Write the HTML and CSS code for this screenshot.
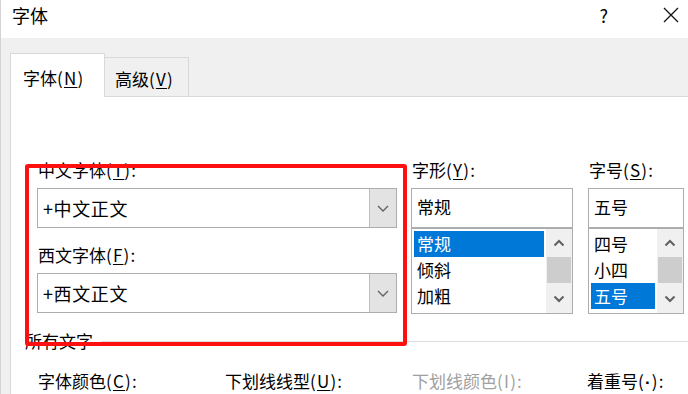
FILE: index.html
```html
<!DOCTYPE html>
<html lang="zh-CN">
<head>
<meta charset="utf-8">
<title>字体</title>
<link rel="stylesheet" href="styles.css">
</head>
<body>
<div class="window">
  <div class="titlebar">
    <span class="title">字体</span>
    <span class="help">?</span>
    <svg class="close" width="16" height="16" viewBox="0 0 16 16"><path d="M1 1 L15 15 M15 1 L1 15" stroke="#111" stroke-width="1.3" fill="none"/></svg>
  </div>
  <div class="frame">
    <div class="tabs">
      <div class="tab active">字体<span class="k">(<u>N</u>)</span></div>
      <div class="tab">高级<span class="k">(<u>V</u>)</span></div>
    </div>
    <div class="panel">
      <div class="fontrow">
        <div class="col col-face">
          <div class="lbl">中文字体<span class="k">(<u>T</u>):</span></div>
          <div class="combo">
            <span class="combo-text">+中文正文</span>
            <span class="drop"><svg width="12" height="7" viewBox="0 0 12 7"><path d="M1 1 L6 6 L11 1" stroke="#606060" stroke-width="1.3" fill="none"/></svg></span>
          </div>
          <div class="lbl lbl-gap">西文字体<span class="k">(<u>F</u>):</span></div>
          <div class="combo">
            <span class="combo-text">+西文正文</span>
            <span class="drop"><svg width="12" height="7" viewBox="0 0 12 7"><path d="M1 1 L6 6 L11 1" stroke="#606060" stroke-width="1.3" fill="none"/></svg></span>
          </div>
        </div>
        <div class="col col-style">
          <div class="lbl">字形<span class="k">(<u>Y</u>):</span></div>
          <div class="input">常规</div>
          <div class="list">
            <div class="items">
              <div class="item sel">常规</div>
              <div class="item">倾斜</div>
              <div class="item">加粗</div>
            </div>
            <div class="scroll">
              <div class="sbtn"><svg width="12" height="8" viewBox="0 0 12 8"><path d="M1.5 6.5 L6 2 L10.5 6.5" stroke="#606060" stroke-width="2" fill="none"/></svg></div>
              <div class="thumb"></div>
              <div class="track"></div>
              <div class="sbtn"><svg width="12" height="8" viewBox="0 0 12 8"><path d="M1.5 1.5 L6 6 L10.5 1.5" stroke="#606060" stroke-width="2" fill="none"/></svg></div>
            </div>
          </div>
        </div>
        <div class="col col-size">
          <div class="lbl">字号<span class="k">(<u>S</u>):</span></div>
          <div class="input">五号</div>
          <div class="list">
            <div class="items">
              <div class="item">四号</div>
              <div class="item">小四</div>
              <div class="item sel">五号</div>
            </div>
            <div class="scroll">
              <div class="sbtn"><svg width="12" height="8" viewBox="0 0 12 8"><path d="M1.5 6.5 L6 2 L10.5 6.5" stroke="#606060" stroke-width="2" fill="none"/></svg></div>
              <div class="thumb"></div>
              <div class="track"></div>
              <div class="sbtn"><svg width="12" height="8" viewBox="0 0 12 8"><path d="M1.5 1.5 L6 6 L10.5 1.5" stroke="#606060" stroke-width="2" fill="none"/></svg></div>
            </div>
          </div>
        </div>
      </div>
      <div class="group"><span>所有文字</span><span class="line"></span></div>
      <div class="bottom">
        <span>字体颜色<span class="k">(<u>C</u>):</span></span>
        <span>下划线线型<span class="k">(<u>U</u>):</span></span>
        <span class="disabled">下划线颜色<span class="k">(I):</span></span>
        <span>着重号<span class="k">(<span class="dot">·</span>):</span></span>
      </div>
    </div>
  </div>
  <div class="mark"></div>
</div>
</body>
</html>
```
FILE: styles.css
```css
* { box-sizing: border-box; margin: 0; padding: 0; }
html, body { width: 688px; height: 394px; overflow: hidden; }
body {
  font-family: "Noto Sans CJK SC", "Microsoft YaHei", sans-serif;
  color: #000;
  background: #fff;
}
u { text-decoration: underline; text-underline-offset: 2px; text-decoration-thickness: 1px; }
.k { letter-spacing: 1.2px; }
.dot { font-family: "Liberation Sans", sans-serif; font-weight: bold; }

.window {
  position: relative;
  width: 688px;
  height: 394px;
  border-left: 1px solid #d4d4d4;
}

.titlebar {
  height: 38px;
  display: flex;
  align-items: flex-start;
  background: #fff;
}
.title { flex: 1; font-size: 18px; line-height: 24px; padding: 3px 0 0 11px; }
.help { font-size: 18px; line-height: 24px; margin-top: 3px; margin-right: 55px; }
.close { margin-top: 7px; margin-right: 9px; }

.frame {
  background: #f0f0f0;
  height: 356px;
  padding: 15px 0 0 9px;
}

.tabs { display: flex; align-items: flex-start; height: 44px; margin-bottom: -1px; }
.tab {
  font-size: 17px;
  line-height: 24px;
  white-space: nowrap;
}
.tab.active {
  position: relative;
  z-index: 2;
  width: 95px;
  height: 44px;
  background: #fff;
  border: 1px solid #d9d9d9;
  border-bottom: none;
  padding: 12px 0 0 12px;
}
.tab:not(.active) {
  width: 84px;
  height: 40px;
  margin-top: 4px;
  border: 1px solid #d9d9d9;
  border-left: none;
  border-bottom: none;
  padding: 9px 0 0 10px;
}

.panel {
  position: relative;
  z-index: 1;
  background: #fff;
  border-top: 1px solid #d9d9d9;
  border-left: 1px solid #d9d9d9;
  height: 298px;
  padding: 62px 0 0 14px;
}

.fontrow { display: flex; padding-left: 12px; }
.col { flex: none; }
.col-face { width: 360px; margin-right: 14px; }
.col-style { width: 162px; margin-right: 15px; }
.col-size { width: 96px; }

.lbl {
  font-size: 17px;
  line-height: 22px;
  height: 29px;
  white-space: nowrap;
  padding-left: 1px;
}
.lbl-gap { margin-top: 16px; }

.combo {
  height: 40px;
  border: 1px solid #adadad;
  display: flex;
  align-items: center;
}
.combo-text { flex: 1; font-size: 18px; letter-spacing: 0.6px; line-height: 24px; padding-left: 5px; }
.drop {
  width: 27px;
  height: 38px;
  background: #e3e3e3;
  border-left: 1px solid #bcbcbc;
  display: flex;
  align-items: center;
  justify-content: center;
}

.input {
  height: 40px;
  border: 1px solid #adadad;
  font-size: 17px;
  line-height: 36px;
  padding-left: 5px;
}

.list {
  height: 86px;
  border: 1px solid #adadad;
  display: flex;
}
.items { flex: 1; padding: 2px; }
.item { height: 26px; line-height: 26px; font-size: 17px; padding-left: 3px; white-space: nowrap; }
.item.sel { background: #0078d7; color: #fff; }

.scroll {
  width: 26px;
  background: #f0f0f0;
  display: flex;
  flex-direction: column;
  align-items: center;
}
.sbtn { width: 100%; height: 28px; display: flex; align-items: center; justify-content: center; }
.thumb { width: 24px; height: 26px; background: #cdcdcd; }
.track { flex: 1; }

.group {
  display: flex;
  align-items: center;
  margin-top: 16px;
  height: 22px;
  font-size: 17px;
  line-height: 22px;
}
.line { flex: 1; height: 1px; background: #dcdcdc; margin-left: 8px; }

.bottom {
  display: grid;
  grid-template-columns: 187px 187px 175px auto;
  padding-left: 13px;
  margin-top: 18px;
  font-size: 17px;
  line-height: 22px;
  white-space: nowrap;
}
.disabled { color: #a0a0a0; }

.mark {
  position: absolute;
  left: 24px;
  top: 164px;
  width: 382px;
  height: 182px;
  border: 4px solid #fe1010;
  border-radius: 3px;
  z-index: 5;
}
```
